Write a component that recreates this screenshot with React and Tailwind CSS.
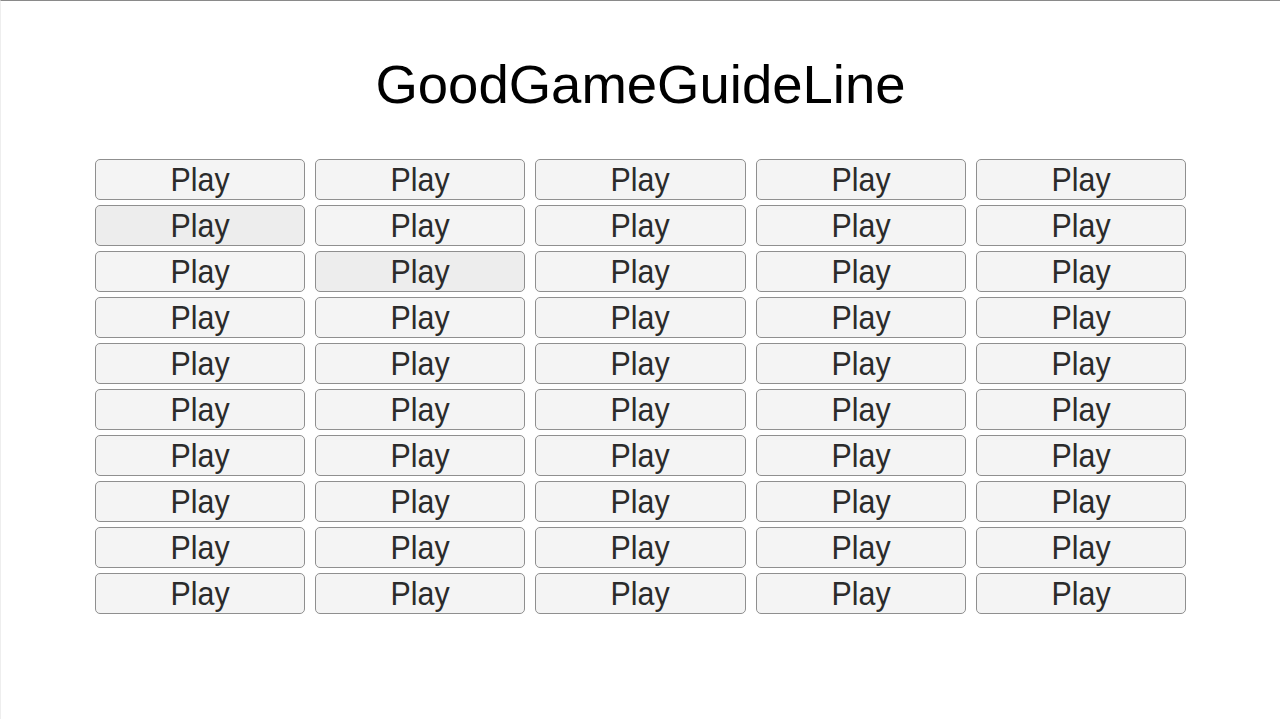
import React from 'react';

const ROWS = 10;
const COLS = 5;

// two buttons look hovered/pressed in the shot
const shaded = new Set(['1-0', '2-1']);

const App = () => {
  return (
    <div
      className="min-h-screen w-full bg-white border-t border-l border-t-[#8a8a8a] border-l-[#eeeeee]"
      style={{ fontFamily: '"Liberation Sans", Arial, sans-serif' }}
    >
      <h1 className="pt-[43px] text-center text-[54.5px] font-normal text-black leading-normal">
        GoodGameGuideLine
      </h1>

      <div className="mx-auto mt-[33px] grid w-[1091px] grid-cols-5 gap-x-[10px] gap-y-[5px]">
        {Array.from({ length: ROWS }).map((_, r) =>
          Array.from({ length: COLS }).map((_, c) => (
            <button
              key={`${r}-${c}`}
              className={
                'flex h-[41px] items-center justify-center rounded-[5px] border border-[#8f8f8f] text-[33px] leading-normal text-[#2b2b2b] ' +
                (shaded.has(`${r}-${c}`) ? 'bg-[#ededed]' : 'bg-[#f4f4f4]')
              }
            >
              <span className="inline-block scale-x-[0.92]">Play</span>
            </button>
          ))
        )}
      </div>
    </div>
  );
};

export default App;
